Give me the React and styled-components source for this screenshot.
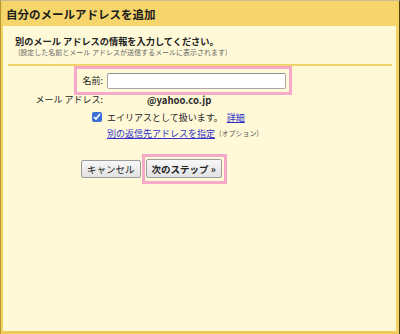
import { styled, createGlobalStyle } from "styled-components";

const Global = createGlobalStyle`
  html, body {
    margin: 0;
    padding: 0;
    background: #fff9d8;
  }
  * {
    box-sizing: border-box;
  }
`;

const Frame = styled.div`
  width: 400px;
  height: 334px;
  border-top: 1px solid #c8bc92;
  border-left: 1px solid #b39733;
  border-right: 1px solid #4f410f;
  font-family: "Noto Sans CJK JP", "Noto Sans", sans-serif;
  color: #222;
`;

const Panel = styled.div`
  height: 100%;
  display: flex;
  flex-direction: column;
  border-left: 2px solid #f2d263;
  border-right: 3px solid #f2d263;
  border-bottom: 3px solid #f0cd5a;
  background: #fff9d8;
`;

const Header = styled.div`
  height: 25px;
  display: flex;
  align-items: center;
  padding-left: 3px;
  background: #f6d56c;
  font-size: 11.5px;
  font-weight: bold;
  color: #1c1c1c;
`;

const Body = styled.div`
  flex: 1;
  padding: 9px 4px 0 5px;
`;

const Heading = styled.div`
  margin-left: 7px;
  font-size: 9.2px;
  line-height: 12px;
  font-weight: bold;
`;

const Note = styled.div`
  margin-left: 10px;
  font-size: 7px;
  line-height: 11px;
  color: #666;
`;

const Divider = styled.div`
  height: 2px;
  margin-top: 6px;
  background: #f1d369;
`;

const Highlight = styled.div`
  display: ${(p) => (p.$inline ? "inline-flex" : "flex")};
  align-items: center;
  width: ${(p) => p.$width || "auto"};
  height: ${(p) => p.$height || "auto"};
  margin-left: ${(p) => p.$left || "0px"};
  padding: ${(p) => p.$pad || "0"};
  border: 3px solid #f6a9c9;
`;

const Label = styled.span`
  width: ${(p) => p.$width};
  text-align: right;
  font-size: 9px;
  line-height: 10px;
  white-space: nowrap;
`;

const NameInput = styled.input`
  width: 179px;
  height: 16px;
  margin: 0 0 0 4px;
  padding: 0 2px;
  border: 1px solid #a8a8a8;
  border-top-color: #8f8f8f;
  border-radius: 2px;
  background: #fff;
  outline: none;
`;

const Row = styled.div`
  display: flex;
  align-items: center;
  margin-top: ${(p) => p.$top || "0px"};
  padding-left: ${(p) => p.$left || "0px"};
  height: ${(p) => p.$height || "14px"};
  font-size: 9px;
  white-space: nowrap;
`;

const Value = styled.span`
  margin-left: 44px;
  font-size: 9.5px;
  font-weight: bold;
  color: #2a2a2a;
`;

const Check = styled.input`
  width: 10px;
  height: 10px;
  margin: 0 5px 0 0;
  accent-color: #3b6fd6;
`;

const Link = styled.a`
  color: #3030c8;
  text-decoration: underline;
  cursor: pointer;
  margin-left: ${(p) => p.$left || "0px"};
`;

const Small = styled.span`
  margin-left: 4px;
  font-size: 7px;
  color: #555;
`;

const Actions = styled.div`
  display: flex;
  align-items: center;
  margin-top: 14px;
  padding-left: 73px;
  gap: 1px;
`;

const Button = styled.button`
  height: ${(p) => (p.$primary ? "19px" : "18px")};
  padding: 0 ${(p) => (p.$primary ? "5px" : "5px")};
  border: 1px solid #9c9c9c;
  border-radius: 2px;
  background: linear-gradient(#f7f7f7, #e2e2e2);
  font-family: inherit;
  font-size: ${(p) => (p.$primary ? "9.5px" : "9.5px")};
  font-weight: ${(p) => (p.$primary ? "bold" : "normal")};
  color: #222;
  cursor: pointer;
  white-space: nowrap;
`;

export default function App() {
  return (
    <>
      <Global />
      <Frame>
        <Panel>
          <Header>自分のメールアドレスを追加</Header>
          <Body>
            <Heading>別のメール アドレスの情報を入力してください。</Heading>
            <Note>(設定した名前とメール アドレスが送信するメールに表示されます)</Note>
            <Divider />

            <Highlight $left="66px" $width="218px" $height="29px" $pad="0 3px">
              <Label $width="23px">名前:</Label>
              <NameInput type="text" />
            </Highlight>

            <Row $height="10px">
              <Label $width="95px">メール アドレス:</Label>
              <Value>@yahoo.co.jp</Value>
            </Row>

            <Row $top="5px" $left="84px">
              <Check type="checkbox" defaultChecked />
              エイリアスとして扱います。
              <Link $left="4px">詳細</Link>
            </Row>

            <Row $top="2px" $left="99px">
              <Link>別の返信先アドレスを指定</Link>
              <Small>(オプション)</Small>
            </Row>

            <Actions>
              <Button>キャンセル</Button>
              <Highlight $inline $pad="2px 2px 3px 1px">
                <Button $primary>次のステップ »</Button>
              </Highlight>
            </Actions>
          </Body>
        </Panel>
      </Frame>
    </>
  );
}
